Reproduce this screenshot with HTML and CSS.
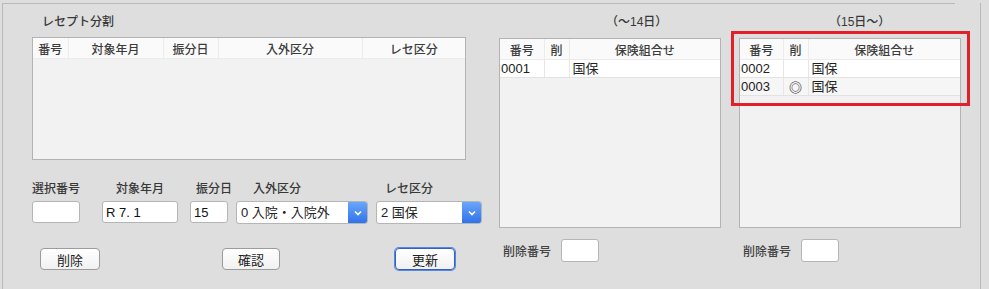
FILE: index.html
```html
<!doctype html>
<html lang="ja">
<head>
    <meta charset="utf-8">
    <title>レセプト分割</title>
    <link rel="stylesheet" href="styles.css">
</head>
<body>
<div class="frame">
    <div class="rule"></div>
    <div class="panes">

        <!-- 左: レセプト分割の一覧と入力欄 -->
        <section class="split">
            <h2 class="title">レセプト分割</h2>
            <div class="list list-split">
                <table>
                    <colgroup>
                        <col style="width: 35px">
                        <col style="width: 95px">
                        <col style="width: 55px">
                        <col style="width: 144px">
                        <col>
                    </colgroup>
                    <thead>
                    <tr><th>番号</th><th>対象年月</th><th>振分日</th><th>入外区分</th><th>レセ区分</th></tr>
                    </thead>
                </table>
            </div>

            <div class="form">
                <div class="field f-no">
                    <label>選択番号</label>
                    <input class="box" type="text">
                </div>
                <div class="field f-month">
                    <label>対象年月</label>
                    <input class="box" type="text" value="R 7. 1">
                </div>
                <div class="field f-day">
                    <label>振分日</label>
                    <input class="box" type="text" value="15">
                </div>
                <div class="field f-kind">
                    <label>入外区分</label>
                    <div class="select"><span>0 入院・入院外</span><i class="arrow"><svg width="8" height="6" viewBox="0 0 8 6"><path d="M1 1.5 L4 4.5 L7 1.5" fill="none" stroke="#fff" stroke-width="1.6"/></svg></i></div>
                </div>
                <div class="field f-rece">
                    <label>レセ区分</label>
                    <div class="select"><span>2 国保</span><i class="arrow"><svg width="8" height="6" viewBox="0 0 8 6"><path d="M1 1.5 L4 4.5 L7 1.5" fill="none" stroke="#fff" stroke-width="1.6"/></svg></i></div>
                </div>
            </div>

            <div class="actions">
                <button class="btn b-del">削除</button>
                <button class="btn b-check">確認</button>
                <button class="btn b-update focus">更新</button>
            </div>
        </section>

        <!-- 中: 14日まで -->
        <section class="half h-before">
            <h2 class="caption">（～14日）</h2>
            <div class="list list-half">
                <table>
                    <colgroup>
                        <col style="width: 44px">
                        <col style="width: 25px">
                        <col>
                    </colgroup>
                    <thead>
                    <tr><th>番号</th><th>削</th><th>保険組合せ</th></tr>
                    </thead>
                    <tbody>
                    <tr><td>0001</td><td class="del"></td><td class="name">国保</td></tr>
                    </tbody>
                </table>
            </div>
            <div class="delete-row">
                <span>削除番号</span>
                <input class="box box-num" type="text">
            </div>
        </section>

        <!-- 右: 15日から -->
        <section class="half h-after">
            <h2 class="caption">（15日～）</h2>
            <div class="list list-half">
                <table>
                    <colgroup>
                        <col style="width: 43px">
                        <col style="width: 25px">
                        <col>
                    </colgroup>
                    <thead>
                    <tr><th>番号</th><th>削</th><th>保険組合せ</th></tr>
                    </thead>
                    <tbody>
                    <tr><td>0002</td><td class="del"></td><td class="name">国保</td></tr>
                    <tr><td>0003</td><td class="del">◎</td><td class="name">国保</td></tr>
                    </tbody>
                </table>
            </div>
            <div class="delete-row">
                <span>削除番号</span>
                <input class="box box-num" type="text">
            </div>
            <div class="mark"></div>
        </section>

    </div>
</div>
</body>
</html>
```

FILE: styles.css
```css
body {
    margin: 0;
    background: #dedede;
    font-family: "Liberation Sans", "Noto Sans CJK JP", sans-serif;
    color: #222;
}

/* 外枠 */
.frame {
    margin: 3px 0 0 2px;
    width: 977px;
    height: 286px;
    border-left: 1px solid #b9b9b9;
    border-right: 1px solid #b9b9b9;
}

.rule {
    width: 953px;
    margin-left: -1px;
    border-top: 1px solid #b9b9b9;
}

.panes {
    display: flex;
    padding-left: 29px;
}

h2 {
    margin: 0;
    font-size: 12px;
    font-weight: 500;
    line-height: 20px;
    color: #383838;
}

.title {
    margin-top: 8px;
    padding-left: 10px;
}

.caption {
    margin-top: 8px;
}

.h-before .caption {
    padding-left: 107px;
}

.h-after .caption {
    padding-left: 90px;
}

/* 一覧 */
.split {
    width: 450px;
}

.list {
    border: 1px solid #b3b3b3;
    background: #f2f2f2;
    box-sizing: border-box;
}

.list-split {
    margin-top: 5px;
    width: 434px;
    height: 123px;
}

.half {
    position: relative;
    width: 222px;
}

.h-before {
    margin-left: 17px;
}

.h-after {
    margin-left: 18px;
}

.list-half {
    margin-top: 6px;
    height: 190px;
}

table {
    width: 100%;
    border-collapse: collapse;
    table-layout: fixed;
}

th {
    height: 20px;
    padding: 0;
    background: #fafafa;
    border-bottom: 1px solid #ececec;
    border-right: 1px solid #ececec;
    font-size: 12px;
    font-weight: 500;
    color: #3c3c3c;
    text-align: center;
}

th:last-child {
    border-right: none;
}

td {
    height: 17px;
    padding: 0 0 0 1px;
    background: #fff;
    border-bottom: 1px solid #e2e2e2;
    border-right: 1px solid #e6e6e6;
    font-size: 13px;
    line-height: 17px;
    white-space: nowrap;
}

td:last-child {
    border-right: none;
}

tbody tr:nth-child(even) td {
    background: #f6f6f6;
}

td.del {
    text-align: center;
    padding: 0;
    font-family: "Noto Sans CJK JP", sans-serif;
    font-size: 13px;
    font-weight: bold;
    color: #333;
}

td.name {
    padding-left: 3px;
}

/* 入力欄 */
.form {
    display: flex;
    margin-top: 20px;
}

.field label {
    display: block;
    height: 18px;
    line-height: 18px;
    font-size: 12px;
    font-weight: 500;
    color: #383838;
    white-space: nowrap;
    margin-bottom: 3px;
}

.box {
    display: block;
    box-sizing: border-box;
    height: 22px;
    margin: 0;
    padding: 0 3px;
    border: 1px solid #b5b5b5;
    border-radius: 3px;
    background: #fff;
    font-family: inherit;
    font-size: 13px;
    color: #111;
}

.f-no { width: 48px; }
.f-no label { text-align: center; }

.f-month { width: 76px; margin-left: 22px; }
.f-month label { text-align: center; }

.f-day { width: 38px; margin-left: 12px; }
.f-day label { padding-left: 6px; }

.f-kind { width: 132px; margin-left: 8px; }
.f-kind label { padding-left: 17px; }

.f-rece { width: 106px; margin-left: 8px; }
.f-rece label { padding-left: 9px; }

.field .box {
    width: 100%;
}

.select {
    display: flex;
    box-sizing: border-box;
    height: 23px;
    border: 1px solid #b5b5b5;
    border-radius: 3px;
    background: #fff;
    overflow: hidden;
}

.select span {
    flex: 1;
    padding-left: 4px;
    font-size: 13px;
    line-height: 21px;
    white-space: nowrap;
}

.arrow {
    display: flex;
    align-items: center;
    justify-content: center;
    width: 19px;
    background: linear-gradient(#6aa6fa, #2f73ea);
}

/* ボタン */
.actions {
    display: flex;
    margin-top: 24px;
}

.btn {
    box-sizing: border-box;
    height: 22px;
    padding: 0;
    border: 1px solid #9c9c9c;
    border-radius: 4px;
    background: linear-gradient(#ffffff, #f1f1f1);
    font-family: inherit;
    font-size: 13px;
    color: #222;
}

.b-del { width: 60px; margin-left: 8px; }
.b-check { width: 58px; margin-left: 122px; }
.b-update { width: 60px; margin-left: 115px; }

.focus {
    border: 1px solid #2f62c8;
    box-shadow: 0 0 0 1px #5b86d8;
}

/* 削除番号 */
.delete-row {
    display: flex;
    align-items: center;
    margin-top: 11px;
    padding-left: 4px;
}

.delete-row span {
    font-size: 12px;
    font-weight: 500;
    color: #444;
    width: 58px;
}

.box-num {
    width: 38px;
    height: 23px;
}

/* 強調枠 (赤) */
.mark {
    position: absolute;
    left: -8px;
    top: 27px;
    width: 233px;
    height: 69px;
    border: 3px solid #e3202a;
}
```
